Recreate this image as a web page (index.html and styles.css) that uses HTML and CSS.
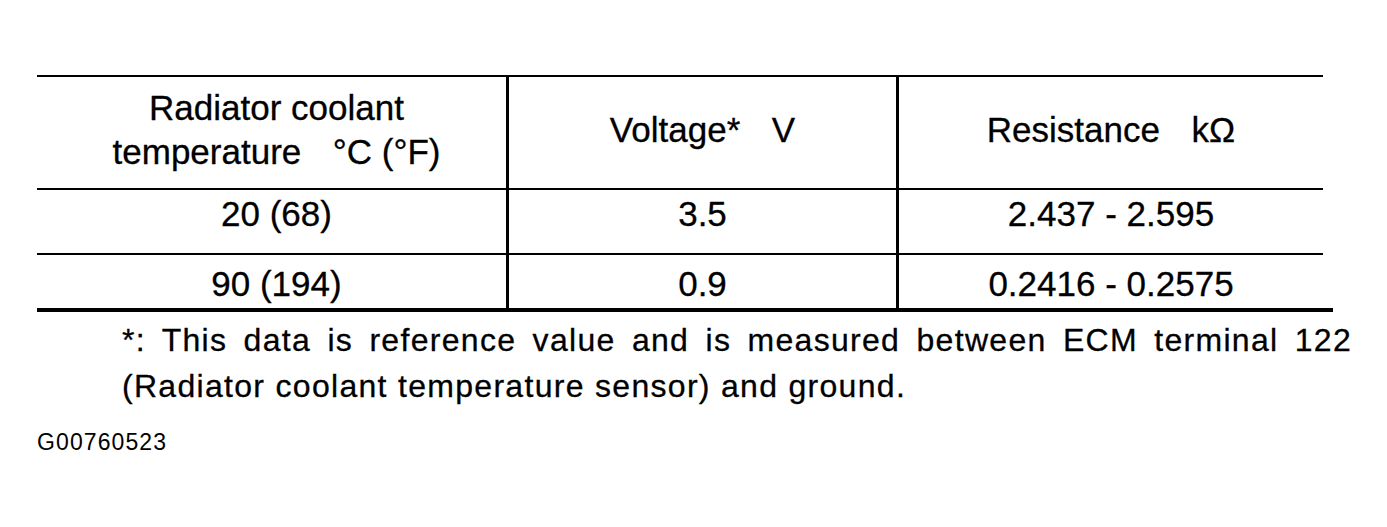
FILE: index.html
```html
<!DOCTYPE html>
<html lang="en">
<head>
    <meta charset="UTF-8">
    <meta name="viewport" content="width=device-width, initial-scale=1.0">
    <title>Radiator Coolant Temperature Sensor</title>
    <link rel="stylesheet" href="styles.css">
</head>
<body>
    <div class="spec">
        <table class="spec-table">
            <colgroup>
                <col class="col-temp">
                <col class="col-volt">
                <col class="col-res">
            </colgroup>
            <thead>
                <tr>
                    <th>Radiator coolant<br>temperature<span class="gap"></span>°C (°F)</th>
                    <th>Voltage*<span class="gap"></span>V</th>
                    <th>Resistance<span class="gap"></span>kΩ</th>
                </tr>
            </thead>
            <tbody>
                <tr class="row-first">
                    <td>20 (68)</td>
                    <td>3.5</td>
                    <td>2.437 - 2.595</td>
                </tr>
                <tr class="row-last">
                    <td>90 (194)</td>
                    <td>0.9</td>
                    <td>0.2416 - 0.2575</td>
                </tr>
            </tbody>
        </table>
    </div>

    <p class="note">*: This data is reference value and is measured between ECM terminal 122 (Radiator coolant temperature sensor) and ground.</p>

    <div class="code">G00760523</div>
</body>
</html>
```

FILE: styles.css
```css
* {
    margin: 0;
    padding: 0;
    box-sizing: border-box;
}

body {
    background: #ffffff;
    color: #000000;
    font-family: 'Liberation Sans', Arial, Helvetica, sans-serif;
}

.spec {
    width: 1296px;
    margin: 75px 0 0 37px;
    border-bottom: 4px solid #000;
}

.spec-table {
    width: 1286px;
    table-layout: fixed;
    border-collapse: separate;
    border-spacing: 0;
    border-top: 2px solid #000;
    font-size: 35px;
    line-height: 44px;
    -webkit-text-stroke: 0.3px #000;
}

.col-temp { width: 469px; }
.col-volt { width: 390px; }
.col-res { width: 427px; }

th, td {
    font-weight: normal;
    text-align: center;
    border-bottom: 2px solid #000;
}

th:first-child, td:first-child {
    padding-left: 10px !important;
}

th + th, td + td {
    border-left: 3px solid #000;
}

th {
    vertical-align: middle;
    padding: 9px 0 14px;
}

.row-first td {
    vertical-align: top;
    padding: 2px 0 17px;
}

.row-last td {
    vertical-align: top;
    padding: 7px 0 2px;
    border-bottom: none;
}

.gap {
    display: inline-block;
    width: 0.9em;
}

.note {
    width: 1230px;
    margin: 5px 0 0 122px;
    font-size: 32px;
    line-height: 46px;
    letter-spacing: 1.3px;
    text-align: justify;
    text-align-last: left;
    -webkit-text-stroke: 0.3px #000;
}

.code {
    margin: 19px 0 0 37px;
    font-size: 23px;
    line-height: 28px;
    letter-spacing: 1.1px;
}
```
